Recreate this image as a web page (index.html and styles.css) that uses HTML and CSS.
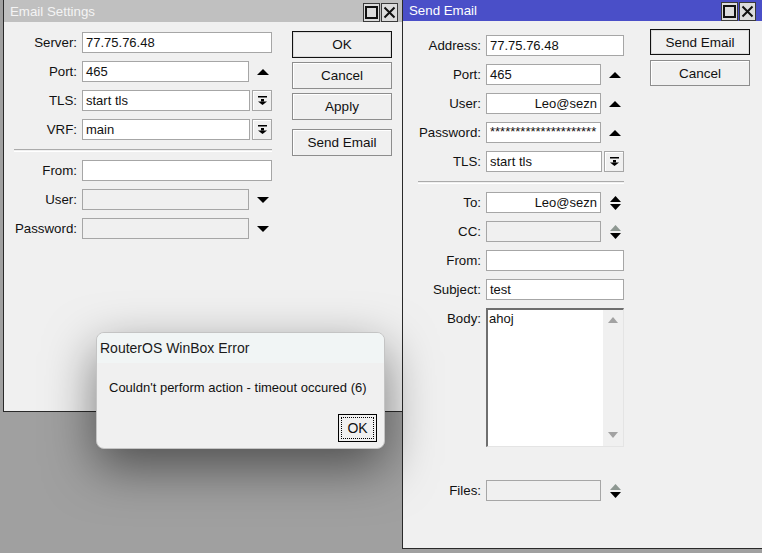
FILE: index.html
```html
<!DOCTYPE html>
<html lang="en">
<head>
    <meta charset="UTF-8">
    <meta name="viewport" content="width=device-width, initial-scale=1.0">
    <title>WinBox - Email</title>
    <link rel="stylesheet" href="styles.css">
</head>
<body>
<div class="desktop">

    <!-- /tool e-mail settings -->
    <div class="window settings">
        <div class="titlebar">
            <span class="title">Email Settings</span>
            <span class="title-buttons">
                <span class="tb-btn"><svg width="13" height="13" viewBox="0 0 13 13"><rect x="1" y="1" width="11" height="11" fill="none" stroke="#111" stroke-width="2"/></svg></span>
                <span class="tb-btn"><svg width="13" height="13" viewBox="0 0 13 13"><path d="M1.5 1.5L11.5 11.5M11.5 1.5L1.5 11.5" stroke="#111" stroke-width="2"/></svg></span>
            </span>
        </div>
        <div class="window-body">
            <div class="form">
                <div class="label">Server:</div>
                <div class="field"><div class="input">77.75.76.48</div></div>

                <div class="label">Port:</div>
                <div class="field"><div class="input">465</div><span class="side"><svg width="12" height="6" viewBox="0 0 12 6"><path d="M0 6L6 0L12 6Z"/></svg></span></div>

                <div class="label">TLS:</div>
                <div class="field"><div class="input">start tls</div><span class="combo"><svg width="9" height="9" viewBox="0 0 9 9"><rect width="9" height="1.5"/><rect x="3" y="3" width="3" height="2.5"/><path d="M0 5.5H9L4.5 9Z"/></svg></span></div>

                <div class="label">VRF:</div>
                <div class="field"><div class="input">main</div><span class="combo"><svg width="9" height="9" viewBox="0 0 9 9"><rect width="9" height="1.5"/><rect x="3" y="3" width="3" height="2.5"/><path d="M0 5.5H9L4.5 9Z"/></svg></span></div>

                <div class="sep"></div>

                <div class="label">From:</div>
                <div class="field"><div class="input"></div></div>

                <div class="label">User:</div>
                <div class="field"><div class="input off"></div><span class="side"><svg width="12" height="6" viewBox="0 0 12 6"><path d="M0 0H12L6 6Z"/></svg></span></div>

                <div class="label">Password:</div>
                <div class="field"><div class="input off"></div><span class="side"><svg width="12" height="6" viewBox="0 0 12 6"><path d="M0 0H12L6 6Z"/></svg></span></div>
            </div>
            <div class="buttons">
                <div class="btn default">OK</div>
                <div class="btn">Cancel</div>
                <div class="btn">Apply</div>
                <div class="btn gap">Send Email</div>
            </div>
        </div>
    </div>

    <!-- /tool e-mail send -->
    <div class="window send">
        <div class="titlebar active">
            <span class="title">Send Email</span>
            <span class="title-buttons">
                <span class="tb-btn"><svg width="13" height="13" viewBox="0 0 13 13"><rect x="1" y="1" width="11" height="11" fill="none" stroke="#111" stroke-width="2"/></svg></span>
                <span class="tb-btn"><svg width="13" height="13" viewBox="0 0 13 13"><path d="M1.5 1.5L11.5 11.5M11.5 1.5L1.5 11.5" stroke="#111" stroke-width="2"/></svg></span>
            </span>
        </div>
        <div class="window-body">
            <div class="form">
                <div class="label">Address:</div>
                <div class="field"><div class="input">77.75.76.48</div></div>

                <div class="label">Port:</div>
                <div class="field"><div class="input">465</div><span class="side"><svg width="12" height="6" viewBox="0 0 12 6"><path d="M0 6L6 0L12 6Z"/></svg></span></div>

                <div class="label">User:</div>
                <div class="field"><div class="input right">Leo@sezn</div><span class="side"><svg width="12" height="6" viewBox="0 0 12 6"><path d="M0 6L6 0L12 6Z"/></svg></span></div>

                <div class="label">Password:</div>
                <div class="field"><div class="input stars">*********************</div><span class="side"><svg width="12" height="6" viewBox="0 0 12 6"><path d="M0 6L6 0L12 6Z"/></svg></span></div>

                <div class="label">TLS:</div>
                <div class="field"><div class="input">start tls</div><span class="combo"><svg width="9" height="9" viewBox="0 0 9 9"><rect width="9" height="1.5"/><rect x="3" y="3" width="3" height="2.5"/><path d="M0 5.5H9L4.5 9Z"/></svg></span></div>

                <div class="sep"></div>

                <div class="label">To:</div>
                <div class="field"><div class="input right">Leo@sezn</div><span class="side"><svg width="11" height="14" viewBox="0 0 11 14"><path d="M0 6L5.5 0L11 6Z"/><path d="M0 8H11L5.5 14Z"/></svg></span></div>

                <div class="label">CC:</div>
                <div class="field"><div class="input off"></div><span class="side"><svg width="11" height="14" viewBox="0 0 11 14"><path d="M0 6L5.5 0L11 6Z" fill="#8e9892"/><path d="M0 8H11L5.5 14Z"/></svg></span></div>

                <div class="label">From:</div>
                <div class="field"><div class="input"></div></div>

                <div class="label">Subject:</div>
                <div class="field"><div class="input">test</div></div>

                <div class="label top">Body:</div>
                <div class="field tall">
                    <div class="textarea">
                        <div class="text">ahoj</div>
                        <div class="scroll">
                            <svg width="10" height="6" viewBox="0 0 10 6"><path d="M0 6L5 0L10 6Z"/></svg>
                            <svg width="10" height="6" viewBox="0 0 10 6"><path d="M0 0H10L5 6Z"/></svg>
                        </div>
                    </div>
                </div>

                <div class="spacer"></div>

                <div class="label">Files:</div>
                <div class="field"><div class="input off"></div><span class="side"><svg width="11" height="14" viewBox="0 0 11 14"><path d="M0 6L5.5 0L11 6Z" fill="#8e9892"/><path d="M0 8H11L5.5 14Z"/></svg></span></div>
            </div>
            <div class="buttons">
                <div class="btn default">Send Email</div>
                <div class="btn">Cancel</div>
            </div>
        </div>
    </div>

    <!-- modal error -->
    <div class="dialog">
        <div class="dialog-title">RouterOS WinBox Error</div>
        <div class="dialog-msg">Couldn't perform action - timeout occured (6)</div>
        <div class="dialog-foot">
            <div class="dialog-ok"><span>OK</span></div>
        </div>
    </div>

</div>
</body>
</html>
```

FILE: styles.css
```css
* {
    box-sizing: border-box;
}
html, body {
    margin: 0;
    padding: 0;
}
body {
    font-family: "Liberation Sans", Arial, sans-serif;
    font-size: 13px;
    color: #111;
    background-color: #a0a0a0;
    overflow: hidden;
}
.desktop {
    position: relative;
    width: 762px;
    height: 553px;
    overflow: hidden;
    background-color: #a0a0a0;
}

/* windows */
.window {
    position: absolute;
    top: -1px;
    display: flex;
    flex-direction: column;
    background-color: #f0f0f0;
    border: 1px solid #2a2a2a;
}
.settings {
    left: 3px;
    width: 401px;
    height: 413px;
    z-index: 1;
}
.send {
    left: 402px;
    width: 361px;
    height: 550px;
    z-index: 2;
}
.titlebar {
    display: flex;
    align-items: center;
    justify-content: space-between;
    height: 22px;
    padding: 0 5px 0 6px;
    background-color: #c0c0c0;
    color: #f4f4f4;
}
.titlebar.active {
    height: 21px;
    padding-right: 6px;
    background-color: #4a4fc8;
    color: #fff;
}
.title {
    font-size: 13.3px;
}
.title-buttons {
    display: flex;
    gap: 1px;
    margin-top: 2px;
}
.tb-btn {
    display: flex;
    align-items: center;
    justify-content: center;
    width: 17px;
    height: 19px;
    background-color: #dcdcdc;
    border: 1px solid #3a3a3a;
}

.window-body {
    display: flex;
    align-items: flex-start;
}
.settings .window-body {
    padding: 9px 0 0 10px;
}
.settings .form {
    margin-top: 1px;
    grid-template-columns: 64px 190px;
}
.send .window-body {
    padding: 8px 0 0 15px;
}
.send .form {
    margin-top: 6px;
    grid-template-columns: 64px 138px;
}

/* form grid */
.form {
    display: grid;
    column-gap: 4px;
    row-gap: 8px;
}
.label {
    display: flex;
    align-items: center;
    justify-content: flex-end;
    height: 21px;
    padding-right: 1px;
    font-size: 13.3px;
    white-space: nowrap;
}
.label.top {
    align-items: flex-start;
    padding-top: 3px;
}
.field {
    display: flex;
    height: 21px;
}
.field.tall {
    height: 139px;
}
.input {
    flex: 1;
    height: 21px;
    padding: 0 3px;
    line-height: 19px;
    background-color: #fff;
    border: 1px solid #a6a6a6;
    white-space: nowrap;
    overflow: hidden;
}
.input.off {
    background-color: #f0f0f0;
}
.input.right {
    text-align: right;
}
.input.stars {
    line-height: 17px;
}
.side {
    display: flex;
    align-items: center;
    justify-content: center;
    width: 23px;
    padding-left: 5px;
}
.combo {
    display: flex;
    align-items: center;
    justify-content: center;
    width: 20px;
    margin-left: 2px;
    background-color: #f0f0f0;
    border: 1px solid #a6a6a6;
    box-shadow: inset 1px 1px #fff;
}
.sep {
    grid-column: 1 / -1;
    height: 3px;
    border-top: 1px solid #ababab;
    border-bottom: 1px solid #fff;
    margin-top: 1px;
}
.spacer {
    grid-column: 1 / -1;
    height: 17px;
}
.textarea {
    flex: 1;
    display: flex;
    background-color: #fff;
    border-top: 2px solid #6f6f6f;
    border-left: 2px solid #6f6f6f;
    border-right: 1px solid #e4e4e4;
    border-bottom: 1px solid #e4e4e4;
}
.textarea .text {
    flex: 1;
    padding: 1px 1px;
}
.textarea .scroll {
    display: flex;
    flex-direction: column;
    justify-content: space-between;
    align-items: center;
    width: 20px;
    padding: 7px 0 8px;
    background-color: #f0f0f0;
    fill: #a2a2a2;
}

/* push buttons */
.buttons {
    display: flex;
    flex-direction: column;
    gap: 4px;
}
.settings .buttons {
    margin-left: 20px;
}
.send .buttons {
    margin-left: 26px;
    gap: 5px;
}
.btn {
    display: flex;
    align-items: center;
    justify-content: center;
    width: 100px;
    height: 27px;
    font-size: 13.5px;
    background-color: #f0f0f0;
    border: 1px solid #8d8d8d;
    box-shadow: inset 1px 1px #fff;
}
.send .btn {
    height: 26px;
}
.btn.default {
    border-color: #111;
    box-shadow: inset 0 0 0 1px #dadada;
}
.btn.gap {
    margin-top: 5px;
}

/* error dialog */
.dialog {
    position: absolute;
    left: 96px;
    top: 332px;
    width: 289px;
    height: 117px;
    z-index: 3;
    display: flex;
    flex-direction: column;
    background-color: #f0f0f0;
    border: 1px solid #c4c4c4;
    border-radius: 8px;
    overflow: hidden;
    box-shadow: 0 18px 50px rgba(0, 0, 0, 0.5);
}
.dialog-title {
    height: 30px;
    line-height: 30px;
    padding-left: 3px;
    font-size: 14px;
    color: #1a1a1a;
    background-color: #f1f5f5;
}
.dialog-msg {
    margin-top: 17px;
    padding-left: 12px;
    font-size: 13px;
}
.dialog-foot {
    display: flex;
    justify-content: flex-end;
    margin-top: auto;
    padding: 0 7px 6px 0;
}
.dialog-ok {
    width: 39px;
    height: 28px;
    padding: 2px;
    border: 1px solid #000;
    font-size: 14px;
}
.dialog-ok span {
    display: flex;
    align-items: center;
    justify-content: center;
    height: 100%;
    border: 1px dotted #000;
}
```
